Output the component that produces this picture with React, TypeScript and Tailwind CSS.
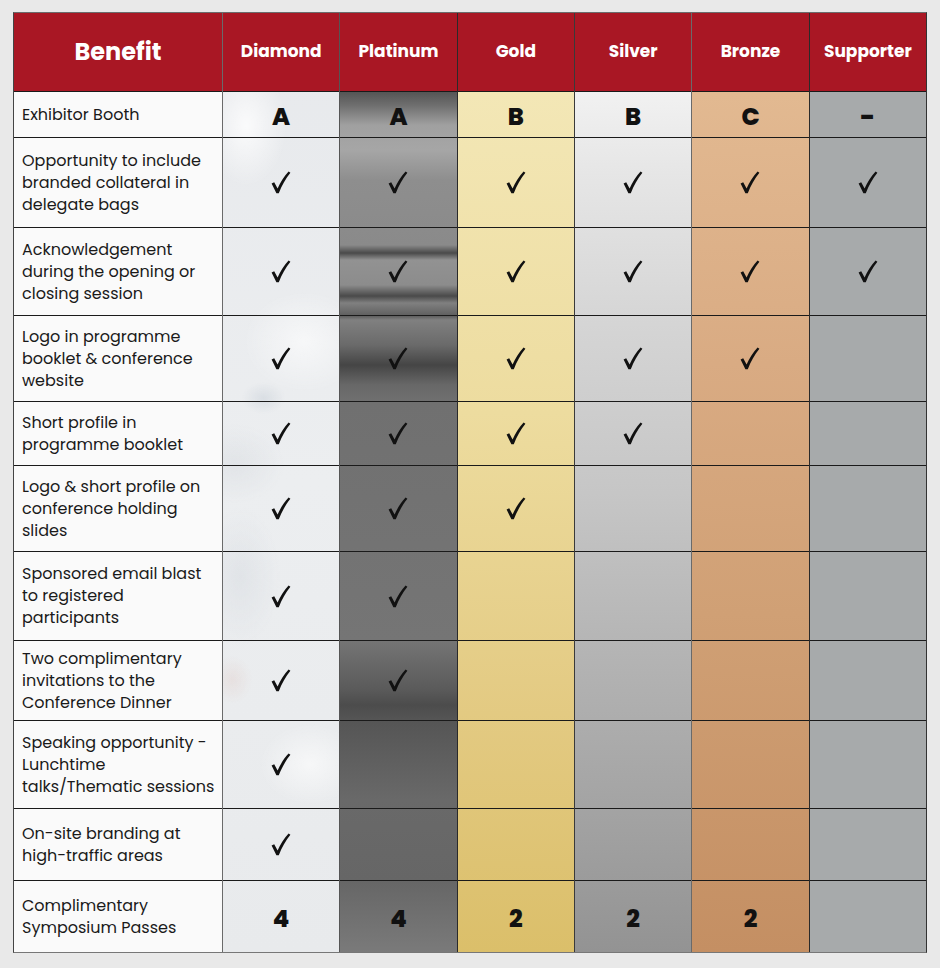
import React from "react";

type Cell = "A" | "B" | "C" | "-" | "4" | "2" | "v" | "";

const rows: { label: string[]; h: string; vals: Cell[] }[] = [
  { label: ["Exhibitor Booth"], h: "h-[46px]", vals: ["A", "A", "B", "B", "C", "-"] },
  { label: ["Opportunity to include", "branded collateral in", "delegate bags"], h: "h-[90px]", vals: ["v", "v", "v", "v", "v", "v"] },
  { label: ["Acknowledgement", "during the opening or", "closing session"], h: "h-[88px]", vals: ["v", "v", "v", "v", "v", "v"] },
  { label: ["Logo in programme", "booklet & conference", "website"], h: "h-[86px]", vals: ["v", "v", "v", "v", "v", ""] },
  { label: ["Short profile in", "programme booklet"], h: "h-[64px]", vals: ["v", "v", "v", "v", "", ""] },
  { label: ["Logo & short profile on", "conference holding", "slides"], h: "h-[86px]", vals: ["v", "v", "v", "", "", ""] },
  { label: ["Sponsored email blast", "to registered", "participants"], h: "h-[89px]", vals: ["v", "v", "", "", "", ""] },
  { label: ["Two complimentary", "invitations to the", "Conference Dinner"], h: "h-[80px]", vals: ["v", "v", "", "", "", ""] },
  { label: ["Speaking opportunity -", "Lunchtime", "talks/Thematic sessions"], h: "h-[88px]", vals: ["v", "", "", "", "", ""] },
  { label: ["On-site branding at", "high-traffic areas"], h: "h-[72px]", vals: ["v", "", "", "", "", ""] },
  { label: ["Complimentary", "Symposium Passes"], h: "h-[71px]", vals: ["4", "4", "2", "2", "2", ""] },
];

const tiers: { name: string; bg: string; border: string }[] = [
  {
    name: "Diamond",
    bg: "bg-[radial-gradient(ellipse_40px_60px_at_20%_12%,rgba(255,255,255,0.8),transparent),radial-gradient(ellipse_22px_16px_at_35%_41%,rgba(185,195,206,0.35),transparent),radial-gradient(ellipse_50px_40px_at_10%_48%,rgba(205,210,216,0.35),transparent),radial-gradient(ellipse_40px_70px_at_15%_60%,rgba(200,206,214,0.3),transparent),radial-gradient(ellipse_20px_24px_at_8%_71%,rgba(215,175,165,0.2),transparent),radial-gradient(ellipse_60px_50px_at_70%_35%,rgba(255,255,255,0.6),transparent),radial-gradient(ellipse_50px_40px_at_75%_80%,rgba(255,255,255,0.6),transparent),linear-gradient(180deg,#e7e9ec,#eceef0_50%,#e8eaec)]",
    border: "border-r-[#555555]",
  },
  {
    name: "Platinum",
    bg: "bg-[linear-gradient(180deg,#555555_79px,#6e6e6e_92px,#a0a0a0_112px,#a6a6a6_137px,#8e8e8e_167px,#8a8a8a_232px,#4a4a4a_240px,#929292_247px,#8c8c8c_272px,#4a4a4a_283px,#808080_290px,#5e5e5e_303px,#808080_307px,#6a6a6a_332px,#454545_352px,#686868_372px,#707070_389px,#757575_627px,#5a5a5a_677px,#4c4c4c_692px,#555555_707px,#696969_787px,#666666_867px,#7a7a7a_939px)]",
    border: "border-r-[#2a2a2a]",
  },
  {
    name: "Gold",
    bg: "bg-[linear-gradient(180deg,#f3e7b6_80px,#eddc9f_400px,#e3ca82_700px,#dbbf6a_939px)]",
    border: "border-r-[#3a3a3a]",
  },
  {
    name: "Silver",
    bg: "bg-[linear-gradient(180deg,#f1f1f1_80px,#e6e6e6_160px,#d4d4d4_320px,#c6c6c6_480px,#b4b4b4_640px,#a3a3a3_800px,#939393_939px)]",
    border: "border-r-[#6a6a6a]",
  },
  {
    name: "Bronze",
    bg: "bg-[linear-gradient(180deg,#e2b991_80px,#d9ab83_350px,#d0a075_600px,#c48f63_939px)]",
    border: "border-r-[#2a2a2a]",
  },
  { name: "Supporter", bg: "bg-[#a7aaab]", border: "border-r-0" },
];

function Check() {
  return (
    <svg width="20" height="23" viewBox="0 0 20 23" className="block">
      <path
        d="M0.6 12.6 L3.2 11.2 L6.6 17.6 C9.2 11.4 13.2 5.2 17.6 0.6 L19.4 1.8 C14.8 7.4 10.8 14.6 7.8 22.2 L5.4 22.2 Z"
        fill="#111111"
      />
    </svg>
  );
}

function Value({ v }: { v: Cell }) {
  if (v === "v") return <Check />;
  if (v === "") return null;
  if (v === "-")
    return <span className="text-[26px] font-extrabold leading-none text-[#111] mt-1">-</span>;
  return <span className="text-[24px] font-extrabold leading-none text-[#111] mt-1">{v}</span>;
}

export default function App() {
  return (
    <div className="min-h-screen w-full bg-[#e9e9e9] pt-[12px] pl-[13px] font-['Poppins','Open_Sans',sans-serif]">
      <div className="flex w-[914px] border border-t-[#6b6b6b] border-l-[#444] border-r-[#333] border-b-[#777]">
        <div className="w-[209px] shrink-0 flex flex-col bg-[#fafafa] border-r border-r-[#6a6a6a]">
          <div className="h-[79px] border-b border-b-[#1a1a1a] bg-[#a91724] flex items-center justify-center">
            <span className="text-white text-[24px] font-bold">Benefit</span>
          </div>
          {rows.map((r, i) => (
            <div
              key={i}
              className={`${r.h} ${i < rows.length - 1 ? "border-b border-b-[#1a1a1a]" : ""} flex flex-col justify-center pl-[8px] text-[16px] leading-[22px] text-[#1a1a1a]`}
            >
              {r.label.map((l, j) => (
                <div key={j} className="whitespace-nowrap">{l}</div>
              ))}
            </div>
          ))}
        </div>
        {tiers.map((t, ti) => (
          <div key={t.name} className={`flex-1 flex flex-col ${t.bg} ${ti < tiers.length - 1 ? "border-r " + t.border : ""}`}>
            <div className="h-[79px] border-b border-b-[#1a1a1a] bg-[#a91724] flex items-center justify-center">
              <span className="text-white text-[17px] font-bold">{t.name}</span>
            </div>
            {rows.map((r, i) => (
              <div
                key={i}
                className={`${r.h} ${i < rows.length - 1 ? "border-b border-b-[#1a1a1a]" : ""} flex items-center justify-center`}
              >
                <Value v={r.vals[ti]} />
              </div>
            ))}
          </div>
        ))}
      </div>
    </div>
  );
}
